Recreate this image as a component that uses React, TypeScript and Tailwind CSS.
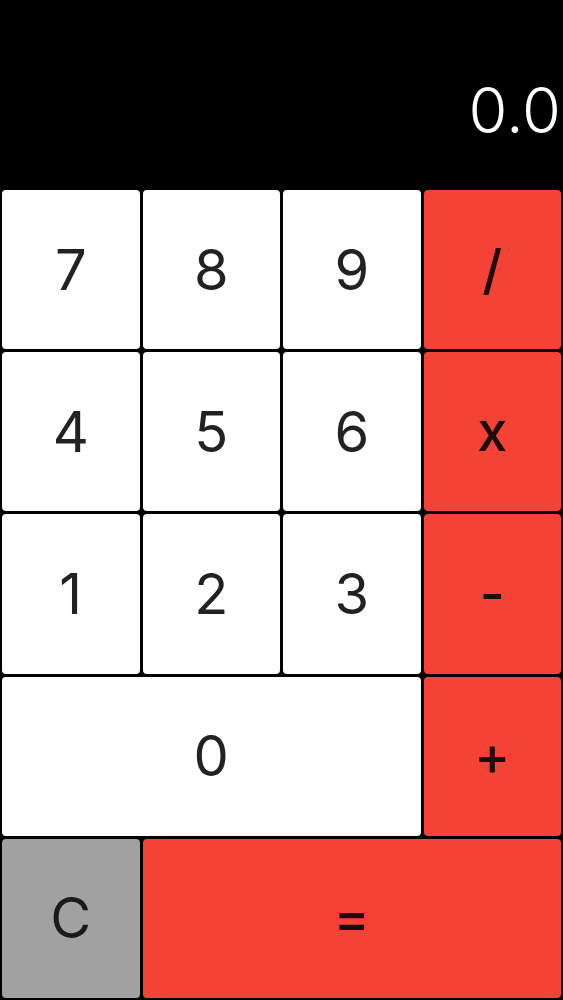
const keys: { label: string; kind: 'num' | 'op' | 'clear'; span?: number }[] = [
  { label: '7', kind: 'num' },
  { label: '8', kind: 'num' },
  { label: '9', kind: 'num' },
  { label: '/', kind: 'op' },
  { label: '4', kind: 'num' },
  { label: '5', kind: 'num' },
  { label: '6', kind: 'num' },
  { label: 'x', kind: 'op' },
  { label: '1', kind: 'num' },
  { label: '2', kind: 'num' },
  { label: '3', kind: 'num' },
  { label: '-', kind: 'op' },
  { label: '0', kind: 'num', span: 3 },
  { label: '+', kind: 'op' },
  { label: 'C', kind: 'clear' },
  { label: '=', kind: 'op', span: 3 },
];

const style = {
  num: 'bg-white text-[56px] text-[#222222]',
  op: 'bg-[#f44336] text-[54px] font-medium text-[#1c0c0c]',
  clear: 'bg-[#a2a1a2] text-[56px] text-[#1a1a1a]',
};

export default function App() {
  return (
    <div className="flex h-[1000px] w-full flex-col bg-black" style={{ fontFamily: 'Inter, "Liberation Sans", sans-serif' }}>
      <div className="flex h-[188px] items-end justify-end pb-[46px] pr-[2px]">
        <span className="text-[63px] font-light leading-none text-white">0.0</span>
      </div>
      <div className="grid flex-1 grid-cols-4 grid-rows-5 gap-[3px] p-[2px]">
        {keys.map((k) => (
          <button
            key={k.label}
            className={`${style[k.kind]} ${k.span === 3 ? 'col-span-3' : ''} flex items-center justify-center rounded-[4px] leading-none`}
          >
            {k.label}
          </button>
        ))}
      </div>
    </div>
  );
}
